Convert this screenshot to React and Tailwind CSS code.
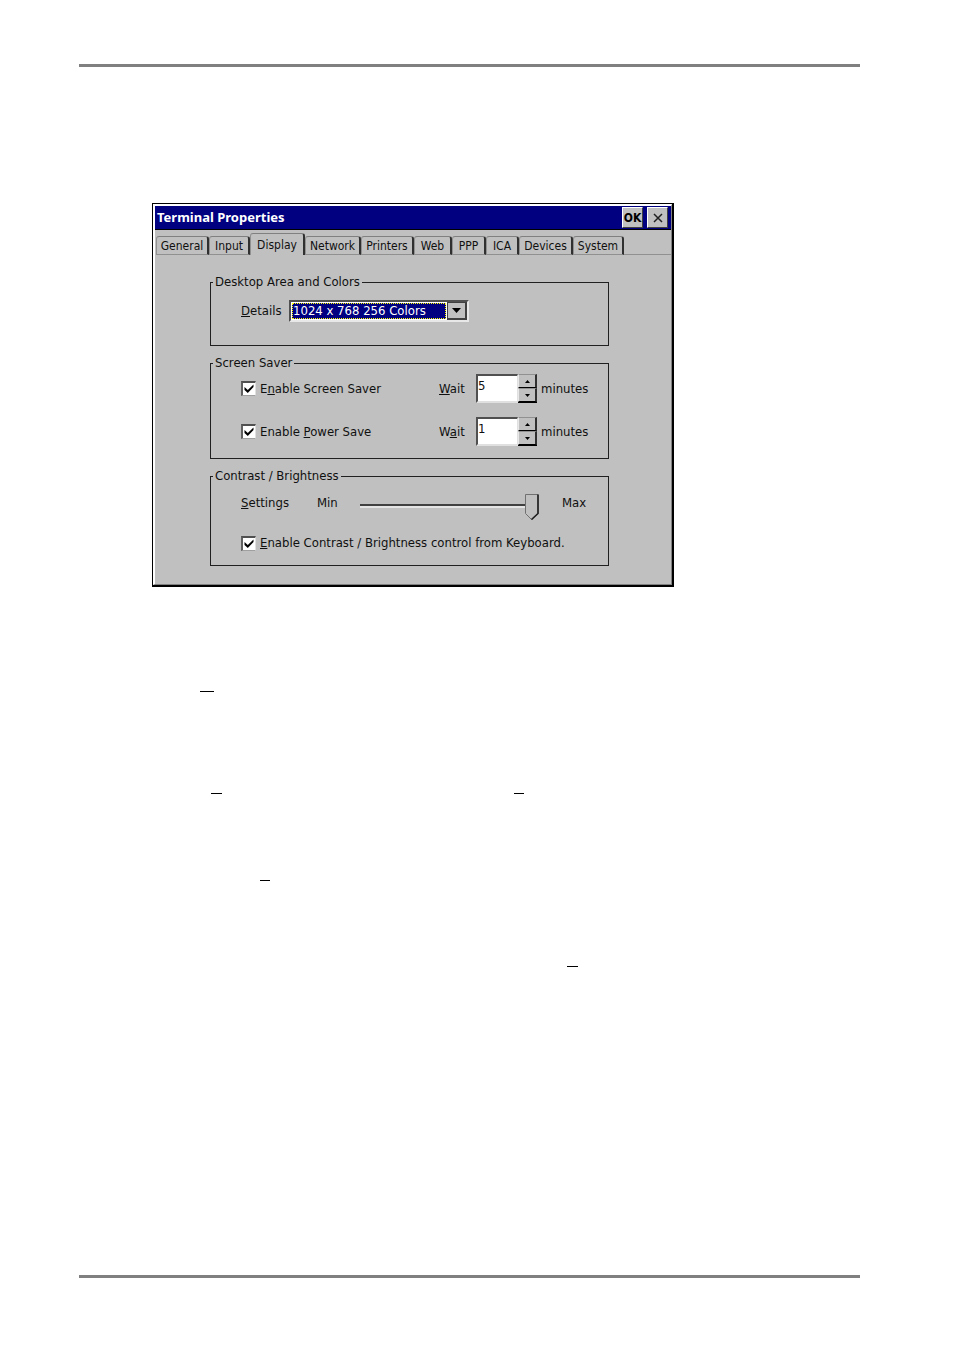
import { useState } from "react";

const tabs = [
  { name: "General", width: "w-[53px]" },
  { name: "Input", width: "w-[41px]" },
  { name: "Display", width: "w-[55px]" },
  { name: "Network", width: "w-[56px]" },
  { name: "Printers", width: "w-[53px]" },
  { name: "Web", width: "w-[38px]" },
  { name: "PPP", width: "w-[34px]" },
  { name: "ICA", width: "w-[33px]" },
  { name: "Devices", width: "w-[54px]" },
  { name: "System", width: "w-[51px]" },
];

function Group({ title, className, children }) {
  return (
    <fieldset className={`border border-[#202020] pl-[30px] ${className}`}>
      <legend className="-ml-7 px-[2px] leading-[14px]">{title}</legend>
      {children}
    </fieldset>
  )
}

function Checkbox({ id, checked, onChange, children }) {
  return (
    <div className="flex items-center gap-1">
      <span className="grid">
        <input
          id={id}
          type="checkbox"
          checked={checked}
          onChange={e => onChange(e.target.checked)}
          className="col-start-1 row-start-1 appearance-none w-[15px] h-[15px] bg-white border-t-2 border-l-2 border-r border-b border-t-[#505050] border-l-[#606060] border-r-[#e0e0e0] border-b-[#a0a0a0]"
        />
        {checked && (
          <svg className="col-start-1 row-start-1 pointer-events-none" width="15" height="15" viewBox="0 0 15 15" aria-hidden="true">
            <path d="M3.5 6L6.8 9L12.5 3.5V6L6.8 12L3.5 9Z" fill="#000" />
          </svg>
        )}
      </span>
      <label htmlFor={id} className="leading-4 whitespace-nowrap">{children}</label>
    </div>
  )
}

function StepButton({ label, up, onClick }) {
  return (
    <button
      type="button"
      aria-label={label}
      onClick={onClick}
      className="flex-1 flex items-center justify-center border-t border-l border-r-2 border-b border-t-[#909090] border-l-[#e8e8e8] border-r-[#303030] border-b-black"
    >
      <svg width="5" height="3" viewBox="0 0 5 3" aria-hidden="true">
        <path d={up ? "M2.5 0L5 3H0Z" : "M0 0H5L2.5 3Z"} fill="#000" />
      </svg>
    </button>
  )
}

function Wait({ id, value, onChange, children }) {
  return (
    <div className="flex items-center">
      <label htmlFor={id} className="w-[37px] leading-4">{children}</label>
      <div className="flex h-[29px]">
        <input
          id={id}
          value={value}
          onChange={e => onChange(Number(e.target.value) || 0)}
          className="w-[42px] bg-white pb-[5px] border-t-2 border-l-2 border-r border-b-2 border-t-[#505050] border-l-[#505050] border-r-[#e0e0e0] border-b-[#e0e0e0] outline-none"
        />
        <div className="flex flex-col w-[19px] border-b border-black">
          <StepButton label="Increase" up onClick={() => onChange(value + 1)} />
          <StepButton label="Decrease" onClick={() => onChange(Math.max(1, value - 1))} />
        </div>
      </div>
      <span className="ml-1 leading-4">minutes</span>
    </div>
  )
}

function Slider({ value, onChange }) {
  return (
    <div className="relative w-[178px] h-[26px]">
      <div className="h-3 border-b-2 border-[#404040]"></div>
      <div className="h-[2px] bg-[#e4e4e4]"></div>
      <svg className="absolute top-0" style={{ left: (value / 100) * 165 }} width="14" height="26" viewBox="0 0 14 26" aria-hidden="true">
        <path d="M0.5 0.5H13V19.5L6.5 25.5L0.5 19.5Z" fill="#c0c0c0" stroke="#707070" />
        <path d="M13 0.5V19.5L6.5 25.5" fill="none" stroke="#202020" strokeWidth="1.6" />
      </svg>
      <input
        id="contrast"
        type="range"
        value={value}
        onChange={e => onChange(Number(e.target.value))}
        className="absolute inset-0 w-full h-full appearance-none bg-transparent outline-none [&::-webkit-slider-thumb]:appearance-none [&::-webkit-slider-thumb]:w-[14px] [&::-webkit-slider-thumb]:h-[26px]"
      />
    </div>
  )
}

function TerminalProperties() {
  const [active, setActive] = useState("Display");
  const [screenSaver, setScreenSaver] = useState(true);
  const [powerSave, setPowerSave] = useState(true);
  const [keyboard, setKeyboard] = useState(true);
  const [saverWait, setSaverWait] = useState(5);
  const [powerWait, setPowerWait] = useState(1);
  const [contrast, setContrast] = useState(100);

  return (
    <div className="w-full max-w-[522px] border-t border-l border-r-2 border-b-2 border-black">
      <div className="border-t-2 border-l-2 border-r border-b border-t-white border-l-white border-r-[#808080] border-b-[#808080] bg-[#c0c0c0]">
        <div className="flex items-center gap-1 h-6 pl-[2px] pr-[3px] bg-[#000080] border-b border-black">
          <h1 className="flex-1 text-white font-bold font-['Noto_Sans',sans-serif]">Terminal Properties</h1>
          <button type="button" className="w-[21px] h-[21px] bg-[#c0c0c0] border border-t-white border-l-white border-r-[#404040] border-b-[#404040] text-xs font-bold text-black leading-4">OK</button>
          <button type="button" aria-label="Close" className="w-[21px] h-[21px] flex items-center justify-center bg-[#c0c0c0] border border-t-white border-l-white border-r-[#404040] border-b-[#404040]">
            <svg width="10" height="10" viewBox="0 0 10 10" aria-hidden="true">
              <path d="M1 1L9 9M9 1L1 9" stroke="#202020" strokeWidth="1.5" />
            </svg>
          </button>
        </div>

        <div role="tablist" className="flex items-end h-[25px] pl-px text-xs">
          {tabs.map(tab => (
            <button
              key={tab.name}
              type="button"
              role="tab"
              aria-selected={active === tab.name}
              onClick={() => setActive(tab.name)}
              className={`${tab.width} shrink-0 text-center rounded-t-[3px] border-t border-l border-t-[#808080] border-l-[#909090] border-r-2 border-r-[#303030] ${active === tab.name ? "h-[22px]" : "h-[19px] border-b border-b-[#909090]"}`}
            >
              {tab.name}
            </button>
          ))}
          <div className="flex-1 border-b border-[#909090]"></div>
        </div>

        <div className="flex flex-col gap-[10px] pt-5 pb-[18px] pl-[55px] pr-[62px]">
          <Group title="Desktop Area and Colors" className="pt-[11px] pb-[23px]">
            <div className="flex">
              <label htmlFor="details" className="w-[48px] leading-[22px]"><u>D</u>etails</label>
              <div className="flex w-[180px] h-[22px] bg-white border-2 border-t-[#505050] border-l-[#505050] border-r-[#e8e8e8] border-b-[#e8e8e8]">
                <div className="flex-1 p-[1px]">
                  <select id="details" className="w-full h-full block appearance-none bg-[#000080] text-white leading-[14px] border border-dotted border-[#ffff00] outline-none">
                    <option>1024 x 768 256 Colors</option>
                  </select>
                </div>
                <span className="w-5 flex items-center justify-center bg-[#c0c0c0] border-t border-l border-r-2 border-b-2 border-[#404040]" aria-hidden="true">
                  <svg width="9" height="5" viewBox="0 0 9 5">
                    <path d="M0 0H9L4.5 5Z" fill="#000" />
                  </svg>
                </span>
              </div>
            </div>
          </Group>

          <Group title="Screen Saver" className="pt-1 pb-3">
            <div className="grid grid-cols-[198px_1fr] gap-y-[14px]">
              <Checkbox id="saver" checked={screenSaver} onChange={setScreenSaver}>E<u>n</u>able Screen Saver</Checkbox>
              <Wait id="saver-wait" value={saverWait} onChange={setSaverWait}><u>W</u>ait</Wait>
              <Checkbox id="power" checked={powerSave} onChange={setPowerSave}>Enable <u>P</u>ower Save</Checkbox>
              <Wait id="power-wait" value={powerWait} onChange={setPowerWait}>W<u>a</u>it</Wait>
            </div>
          </Group>

          <Group title="Contrast / Brightness" className="pt-[11px] pb-[14px]">
            <div className="flex items-start leading-[18px] mb-[15px]">
              <label htmlFor="contrast" className="w-[76px]"><u>S</u>ettings</label>
              <span className="w-[43px]">Min</span>
              <Slider value={contrast} onChange={setContrast} />
              <span className="ml-6">Max</span>
            </div>
            <Checkbox id="keyboard" checked={keyboard} onChange={setKeyboard}><u>E</u>nable Contrast / Brightness control from Keyboard.</Checkbox>
          </Group>
        </div>
      </div>
    </div>
  )
}

export default function App() {
  return (
    <div className="min-h-screen flex flex-col bg-white pt-16 pb-[70px] pl-[79px] pr-[94px]">
      <div className="h-[3px] bg-[#808080]"></div>

      <main className="mt-[136px] pl-[73px] text-[13px] text-[#101010] font-['DejaVu_Sans_Condensed','DejaVu_Sans',sans-serif]">
        <TerminalProperties />

        <div className="mt-[104px] pl-12">
          <div className="w-[14px] h-px bg-black"></div>
        </div>
        <div className="mt-[101px] pl-[59px] flex gap-[292px]">
          <div className="w-[11px] h-px bg-black"></div>
          <div className="w-[10px] h-px bg-black"></div>
        </div>
        <div className="mt-[86px] pl-[108px]">
          <div className="w-[10px] h-px bg-black"></div>
        </div>
        <div className="mt-[85px] pl-[415px]">
          <div className="w-[11px] h-px bg-black"></div>
        </div>
      </main>

      <div className="mt-auto h-[3px] bg-[#808080]"></div>
    </div>
  )
}
